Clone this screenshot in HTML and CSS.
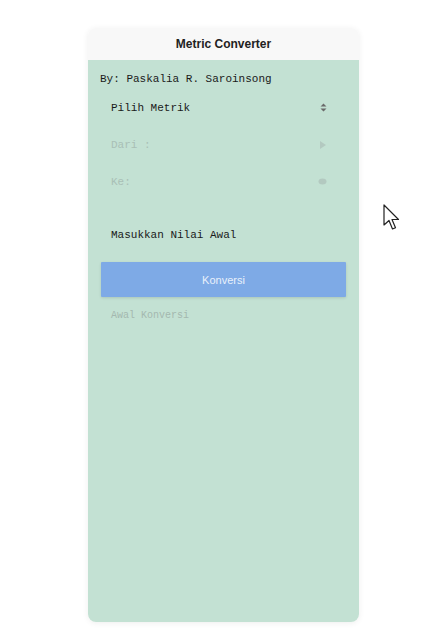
FILE: index.html
```html
<!DOCTYPE html>
<html>
<head>
<meta charset="utf-8">
<link rel="stylesheet" href="styles.css">
</head>
<body>
<div class="card">
  <div class="header">Metric Converter</div>
  <div class="content">
    <div class="byline">By: Paskalia R. Saroinsong</div>
    <div class="row first">
      <span class="label">Pilih Metrik</span>
      <svg class="ico" width="7" height="9" viewBox="0 0 7 9"><path d="M3.5 0.5 L6.5 3.5 H0.5 Z M3.5 8.5 L6.5 5.5 H0.5 Z" fill="#6a6a6a"/></svg>
    </div>
    <div class="row faded">
      <span class="label">Dari :</span>
      <svg class="ico" width="8" height="10" viewBox="0 0 8 10"><path d="M1 1 L7 5 L1 9 Z" fill="#b3c9c0"/></svg>
    </div>
    <div class="row faded">
      <span class="label">Ke:</span>
      <svg class="ico" width="9" height="9" viewBox="0 0 9 9"><ellipse cx="4.5" cy="4.5" rx="4" ry="3" fill="#b3c9c0"/></svg>
    </div>
    <div class="input">Masukkan Nilai Awal</div>
    <button class="btn">Konversi</button>
    <div class="result">Awal Konversi</div>
  </div>
</div>
<svg class="cursor" width="18" height="28" viewBox="0 0 18 28"><path d="M1 1 L1 21 L6 16.5 L9.5 25 L12.5 23.7 L9 15.5 L15.5 15.5 Z" fill="#fff" stroke="#222" stroke-width="1.2" stroke-linejoin="round"/></svg>
</body>
</html>
```
FILE: styles.css
```css
html, body { margin: 0; padding: 0; background: #ffffff; }
body { position: relative; width: 448px; height: 640px; overflow: hidden; }
.card {
  margin: 28px 0 0 88px;
  width: 271px;
  height: 594px;
  border-radius: 8px;
  overflow: hidden;
  display: flex;
  flex-direction: column;
  box-shadow: 0 1px 6px rgba(0,0,0,0.07);
}
.header {
  height: 32px;
  background: #f8f8f8;
  display: flex;
  align-items: center;
  justify-content: center;
  font-family: "Liberation Sans", Arial, sans-serif;
  font-weight: bold;
  font-size: 12px;
  color: #222;
}
.content {
  flex: 1;
  background: #c3e1d3;
  font-family: "Liberation Mono", "Courier New", monospace;
  font-size: 11px;
  color: #1a1a1a;
  display: flex;
  flex-direction: column;
}
.byline {
  margin-top: 12px;
  height: 14px;
  line-height: 14px;
  padding-left: 12px;
}
.row {
  height: 37px;
  display: flex;
  align-items: center;
  justify-content: space-between;
  padding: 0 32px 0 23px;
}
.row.first { margin-top: 3px; }
.faded { color: #a9bfb6; }
.ico { display: block; }
.input {
  margin-top: 18px;
  height: 35px;
  line-height: 35px;
  padding-left: 23px;
  color: #1a1a1a;
}
.btn {
  margin: 9px 0 0 13px;
  width: 245px;
  height: 35px;
  border: none;
  border-radius: 1px;
  background: #7eaae6;
  color: #e9f1fb;
  font-family: "Liberation Sans", Arial, sans-serif;
  font-size: 11px;
  padding: 0;
  box-shadow: 0 1px 3px rgba(0,0,0,0.12);
}
.result {
  margin-top: 13px;
  padding-left: 23px;
  font-size: 10px;
  line-height: 12px;
  color: #a3b8af;
}
.cursor { position: absolute; left: 383px; top: 204px; }
```
